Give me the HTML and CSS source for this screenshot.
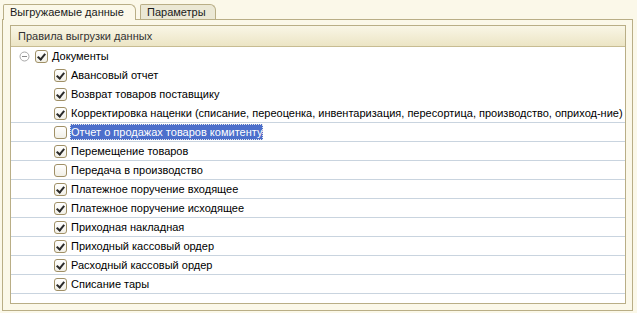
FILE: index.html
```html
<!DOCTYPE html>
<html lang="ru">
<head>
    <meta charset="UTF-8">
    <title>Выгружаемые данные</title>
    <link rel="stylesheet" href="styles.css">
</head>
<body>

    <!-- Tabs -->
    <div class="tabs">
        <div class="tab active">Выгружаемые данные</div>
        <div class="tab">Параметры</div>
    </div>

    <div class="panel">
        <div class="grid">
            <div class="grid-header">Правила выгрузки данных</div>

            <div class="row level-0 no-line">
                <svg class="toggle" width="11" height="11" viewBox="0 0 11 11"><circle cx="5.5" cy="5.5" r="4.5" fill="#fff" stroke="#a8a8a8"/><path d="M3 5.5h5" stroke="#8a8a8a"/></svg>
                <span class="check on"></span>
                <span class="label">Документы</span>
            </div>
            <div class="row level-1 no-line"><span class="check on"></span><span class="label">Авансовый отчет</span></div>
            <div class="row level-1 no-line"><span class="check on"></span><span class="label">Возврат товаров поставщику</span></div>
            <div class="row level-1"><span class="check on"></span><span class="label">Корректировка наценки (списание, переоценка, инвентаризация, пересортица, производство, оприход-ние)</span></div>
            <div class="row level-1"><span class="check"></span><span class="label selected">Отчет о продажах товаров комитенту</span></div>
            <div class="row level-1"><span class="check on"></span><span class="label">Перемещение товаров</span></div>
            <div class="row level-1"><span class="check"></span><span class="label">Передача в производство</span></div>
            <div class="row level-1"><span class="check on"></span><span class="label">Платежное поручение входящее</span></div>
            <div class="row level-1"><span class="check on"></span><span class="label">Платежное поручение исходящее</span></div>
            <div class="row level-1"><span class="check on"></span><span class="label">Приходная накладная</span></div>
            <div class="row level-1"><span class="check on"></span><span class="label">Приходный кассовый ордер</span></div>
            <div class="row level-1"><span class="check on"></span><span class="label">Расходный кассовый ордер</span></div>
            <div class="row level-1"><span class="check on"></span><span class="label">Списание тары</span></div>
        </div>
    </div>

</body>
</html>
```

FILE: styles.css
```css
* {
    margin: 0;
    padding: 0;
    box-sizing: border-box;
}

body {
    font-family: "Liberation Sans", Arial, sans-serif;
    font-size: 11px;
    color: #000;
    background-color: #fbf8e9;
    width: 637px;
    height: 313px;
    overflow: hidden;
}

/* Tabs */
.tabs {
    display: flex;
    align-items: flex-end;
    gap: 4px;
    padding: 3px 0 0 3px;
    height: 19px;
    position: relative;
    z-index: 1;
}

.tab {
    height: 15px;
    padding: 0 9px 0 6px;
    line-height: 14px;
    border: 1px solid #b9ae86;
    border-bottom: none;
    border-radius: 2px 6px 0 0;
    background-color: #ebe8d5;
    color: #1a1a1a;
}

.tab.active {
    height: 16px;
    width: 133px;
    padding-left: 6px;
    margin-bottom: -1px;
    background-color: #fbf8e9;
}

/* Panel */
.panel {
    margin: 0 4px 0 2px;
    height: 292px;
    border: 1px solid #b9ae86;
    padding: 5px 6px 6px 7px;
}

.grid {
    height: 100%;
    border: 1px solid #b9ae86;
    background-color: #fff;
    overflow: hidden;
}

.grid-header {
    height: 21px;
    line-height: 20px;
    padding-left: 7px;
    color: #333;
    background: linear-gradient(#f9f6e6, #ece5c5);
    border-bottom: 1px solid #c7bc92;
}

/* Rows */
.row {
    display: flex;
    align-items: center;
    height: 19px;
    border-bottom: 1px solid #c9d4df;
    white-space: nowrap;
}

.row.no-line {
    border-bottom-color: transparent;
}

.row.level-0 {
    padding-left: 8px;
}

.row.level-1 {
    padding-left: 43px;
}

.toggle {
    margin-right: 5px;
}

.check {
    width: 13px;
    height: 13px;
    border: 1px solid #a09066;
    border-radius: 3px;
    background: linear-gradient(#fff, #f1efe6);
    margin-right: 3px;
    flex-shrink: 0;
    position: relative;
}

.check.on::after {
    content: "";
    position: absolute;
    left: 3px;
    top: 1px;
    width: 3px;
    height: 6px;
    border: solid #2a2a2a;
    border-width: 0 2px 2px 0;
    transform: rotate(40deg);
}

.label {
    padding: 1px 1px;
    line-height: 14px;
}

.label.selected {
    background-color: #4c6fcb;
    color: #fff;
    outline: 1px dotted #e8e8e8;
    outline-offset: -1px;
}
```
